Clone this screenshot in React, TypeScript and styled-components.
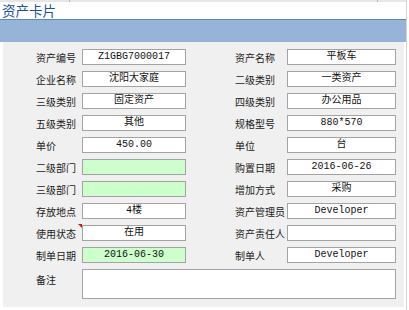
import React from "react";
import styled, { createGlobalStyle } from "styled-components";

const Global = createGlobalStyle`
  html, body { margin: 0; padding: 0; background: #ffffff; }
  body { font-family: "Noto Sans CJK SC", "Noto Sans", sans-serif; }
`;

const Frame = styled.div`
  width: 406px;
  height: 310px;
  border-right: 1px solid #d4d4d4;
  display: flex;
  flex-direction: column;
  background: #ffffff;
  & > * { flex-shrink: 0; }
`;

const TopStrip = styled.div`
  height: 2px;
  background: #e6e6e6;
  display: grid;
  grid-template-columns: 70px 308px 1fr;
`;

const StripCell = styled.div`
  border-right: 1px solid #b8b8b8;
  &:last-child { border-right: none; }
`;

const TitleRow = styled.div`
  height: 17px;
  display: flex;
  align-items: center;
  padding-left: 2px;
`;

const Title = styled.span`
  font-size: 13.5px;
  line-height: 17px;
  color: #21509b;
`;

const BlueBar = styled.div`
  height: 22px;
  background: #96b3d8;
  border-top: 1px solid #5b87c3;
`;

const Panel = styled.div`
  margin-left: 3px;
  margin-right: 2px;
  background: #f0f0f0;
  padding: 7px 0 8px 33px;
  display: grid;
  grid-template-columns: 46px 104px 49px 52px 109px;
  grid-template-rows: repeat(10, 16px) 30px;
  row-gap: 6px;
`;

const Label = styled.div`
  font-size: 10px;
  line-height: 16px;
  color: #1a1a1a;
  white-space: nowrap;
  padding-top: 1px;
`;

const NoteLabel = styled(Label)`
  padding-top: 3px;
`;

const Field = styled.div<{ $green?: boolean }>`
  box-sizing: border-box;
  height: 16px;
  border: 1px solid #a3a3a3;
  background: ${(p) => (p.$green ? "#ccffcc" : "#ffffff")};
  font-family: "Liberation Mono", "Noto Sans CJK SC", monospace;
  font-size: 10px;
  line-height: 14px;
  color: #111;
  text-align: center;
  white-space: nowrap;
  overflow: hidden;
`;

const Spacer = styled.div``;

const FieldWrap = styled.div`
  position: relative;
`;

const Marker = styled.div`
  position: absolute;
  left: -4px;
  top: -1px;
  width: 0;
  height: 0;
  border-top: 4px solid #e01010;
  border-left: 4px solid transparent;
`;

const NoteArea = styled.div`
  grid-column: 2 / span 4;
  box-sizing: border-box;
  height: 30px;
  border: 1px solid #a3a3a3;
  background: #ffffff;
`;

type Row = {
  l1: string;
  v1: string;
  g1?: boolean;
  mark?: boolean;
  l2: string;
  v2: string;
  g2?: boolean;
};

const rows: Row[] = [
  { l1: "资产编号", v1: "Z1GBG7000017", l2: "资产名称", v2: "平板车" },
  { l1: "企业名称", v1: "沈阳大家庭", l2: "二级类别", v2: "一类资产" },
  { l1: "三级类别", v1: "固定资产", l2: "四级类别", v2: "办公用品" },
  { l1: "五级类别", v1: "其他", l2: "规格型号", v2: "880*570" },
  { l1: "单价", v1: "450.00", l2: "单位", v2: "台" },
  { l1: "二级部门", v1: "", g1: true, l2: "购置日期", v2: "2016-06-26" },
  { l1: "三级部门", v1: "", g1: true, l2: "增加方式", v2: "采购" },
  { l1: "存放地点", v1: "4楼", l2: "资产管理员", v2: "Developer" },
  { l1: "使用状态", v1: "在用", mark: true, l2: "资产责任人", v2: "" },
  { l1: "制单日期", v1: "2016-06-30", g1: true, l2: "制单人", v2: "Developer" },
];

export default function App() {
  return (
    <>
      <Global />
      <Frame>
        <TopStrip>
          <StripCell />
          <StripCell />
          <StripCell />
        </TopStrip>
        <TitleRow>
          <Title>资产卡片</Title>
        </TitleRow>
        <BlueBar />
        <Panel>
          {rows.map((r) => (
            <React.Fragment key={r.l1}>
              <Label>{r.l1}</Label>
              <FieldWrap>
                {r.mark && <Marker />}
                <Field $green={r.g1}>{r.v1}</Field>
              </FieldWrap>
              <Spacer />
              <Label>{r.l2}</Label>
              <Field $green={r.g2}>{r.v2}</Field>
            </React.Fragment>
          ))}
          <NoteLabel>备注</NoteLabel>
          <NoteArea />
        </Panel>
      </Frame>
    </>
  );
}
